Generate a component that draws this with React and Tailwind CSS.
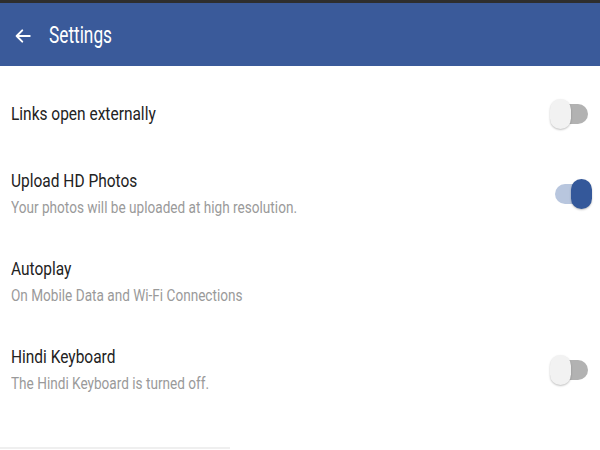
import React, { useState } from 'react';

const ROWS = [
  { id: 'links', title: 'Links open externally', toggle: false },
  { id: 'hd', title: 'Upload HD Photos', sub: 'Your photos will be uploaded at high resolution.', toggle: true },
  { id: 'autoplay', title: 'Autoplay', sub: 'On Mobile Data and Wi-Fi Connections' },
  { id: 'hindi', title: 'Hindi Keyboard', sub: 'The Hindi Keyboard is turned off.', toggle: false },
];

function Toggle({ on, onClick }) {
  return (
    <button onClick={onClick} className="relative w-[42px] h-[30px] shrink-0">
      <span className={`absolute left-[5px] right-[4px] top-[5px] h-[20px] rounded-full ${on ? 'bg-[#b8c6de]' : 'bg-[#b2b2b2]'}`} />
      <span
        className={`absolute top-0 w-[21px] h-[30px] rounded-full shadow-[0_1px_2px_rgba(0,0,0,0.25)] ${on ? 'left-[21px] bg-[#34589a]' : 'left-0 bg-[#f2f2f2]'}`}
      />
    </button>
  );
}

export default function App() {
  const [state, setState] = useState({ links: false, hd: true, hindi: false });

  return (
    <div className="w-[600px] h-[450px] bg-white overflow-hidden flex flex-col" style={{ fontFamily: 'Roboto, "Noto Sans", sans-serif' }}>
      <div className="h-[3px] bg-[#2e2e2e] shrink-0" />
      {/* App bar */}
      <div className="h-[63px] shrink-0 bg-[#3a5a9a] flex items-center pl-[14px] pt-[3px]">
        <svg width="18" height="18" viewBox="0 0 24 24" fill="none" stroke="white" strokeWidth="2.6" strokeLinecap="round" strokeLinejoin="round">
          <path d="M21 12H3.5M11 4.5 3.5 12l7.5 7.5" />
        </svg>
        <span className="ml-[17px] text-white text-[23px] origin-left scale-x-[0.75] inline-block">Settings</span>
      </div>

      {/* Rows */}
      <div className="pt-[33px] pl-[11px] pr-[8px]">
        {ROWS.map((row, i) => (
          <div key={row.id} className={i === 0 ? 'h-[70px]' : 'h-[88px]'}>
            <div className="flex items-center">
              <div className="flex-1">
                <div className="text-[19px] leading-[24px] text-[#222] origin-left scale-x-[0.815]">{row.title}</div>
                {row.sub && (
                  <div className="text-[16px] leading-[20px] mt-[5px] text-[#9a9a9a] origin-left scale-x-[0.85]">{row.sub}</div>
                )}
              </div>
              {row.toggle !== undefined && (
                <Toggle on={state[row.id]} onClick={() => setState(s => ({ ...s, [row.id]: !s[row.id] }))} />
              )}
            </div>
          </div>
        ))}
      </div>

      {/* Next row's edge peeking at the bottom */}
      <div className="mt-auto mb-[1px] h-[2px] w-[230px] bg-[#efefef] shrink-0" />
    </div>
  );
}
